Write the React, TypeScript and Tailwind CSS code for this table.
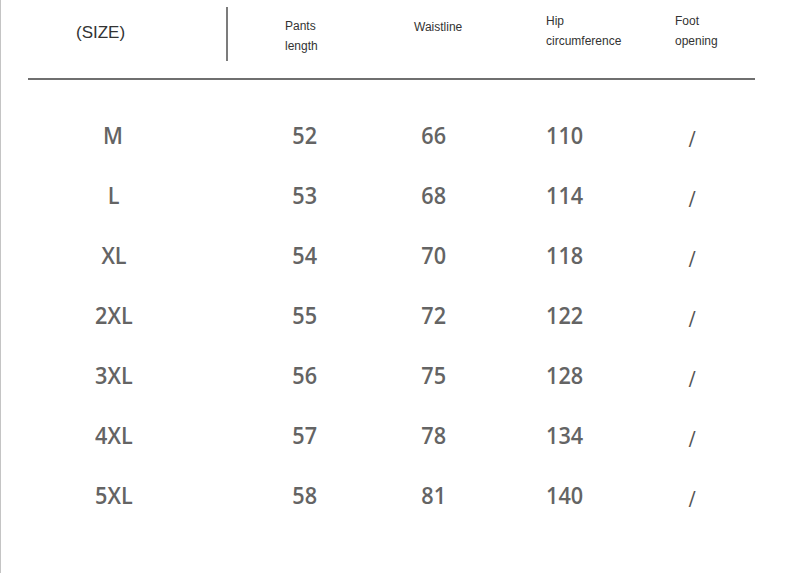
const rows = [
  { size: "M", pants: 52, waist: 66, hip: 110 },
  { size: "L", pants: 53, waist: 68, hip: 114 },
  { size: "XL", pants: 54, waist: 70, hip: 118 },
  { size: "2XL", pants: 55, waist: 72, hip: 122 },
  { size: "3XL", pants: 56, waist: 75, hip: 128 },
  { size: "4XL", pants: 57, waist: 78, hip: 134 },
  { size: "5XL", pants: 58, waist: 81, hip: 140 },
]

function Cell({ width, children, slash }: { width: string; children: React.ReactNode; slash?: boolean }) {
  return (
    <div className={`${width} flex justify-center`}>
      <span
        className={`inline-block scale-x-[0.9] ${
          slash ? "font-normal text-[22px] translate-y-[3px] text-[#555]" : "font-semibold text-[24px]"
        }`}
      >
        {children}
      </span>
    </div>
  )
}

export default function App() {
  return (
    <div className="w-[790px] h-[573px] bg-white border-l border-[#c4c4c4] overflow-hidden">
      <div className="flex h-[78px] font-['Liberation_Sans',Arial,sans-serif] text-[#333]">
        <div className="w-[225px] pl-[75px] pt-[23px] text-[17px] leading-[20px]">(SIZE)</div>
        <div className="w-[2px] h-[54px] mt-[7px] bg-[#7c7c7c]" />
        <div className="w-[186px] pl-[57px] pt-[16px] text-[12px] leading-[20px]">
          <div>Pants</div>
          <div>length</div>
        </div>
        <div className="w-[132px] pt-[17px] text-[12px] leading-[20px]">Waistline</div>
        <div className="w-[129px] pt-[11px] text-[12px] leading-[20px]">
          <div>Hip</div>
          <div>circumference</div>
        </div>
        <div className="pt-[11px] text-[12px] leading-[20px]">
          <div>Foot</div>
          <div>opening</div>
        </div>
      </div>
      <div className="ml-[27px] w-[727px] h-[2px] bg-[#6f6f6f]" />
      <div className="mt-[25px] font-['Open_Sans','Noto_Sans',sans-serif] text-[#646464]">
        {rows.map((r) => (
          <div key={r.size} className="flex h-[60px] items-center">
            <Cell width="w-[225px]">{r.size}</Cell>
            <Cell width="w-[158px]">{r.pants}</Cell>
            <Cell width="w-[100px]">{r.waist}</Cell>
            <Cell width="w-[162px]">{r.hip}</Cell>
            <Cell width="w-[92px]" slash>/</Cell>
          </div>
        ))}
      </div>
    </div>
  )
}
